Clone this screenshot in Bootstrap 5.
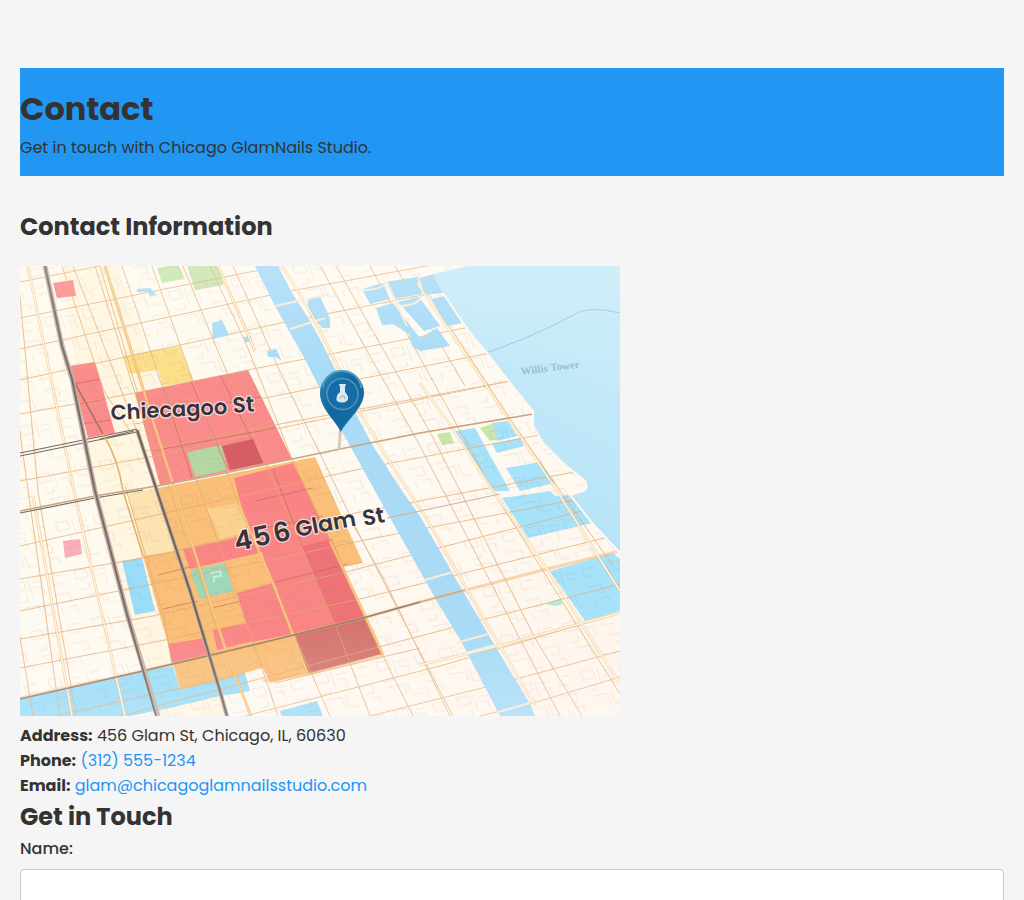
<!DOCTYPE html>
<html lang="en">
<head>
<meta charset="utf-8">
<meta name="viewport" content="width=device-width, initial-scale=1">
<title>Contact - Chicago GlamNails Studio</title>
<link href="https://cdn.jsdelivr.net/npm/bootstrap@5.3.0/dist/css/bootstrap.min.css" rel="stylesheet">
<style>
  body { background: #f5f5f5; color: #333; font-family: Poppins, Inter, "Open Sans", sans-serif; font-size: 16px; line-height: 25px; }
  .page { padding: 68px 20px 0; }
  .hero { background: #2196f3; padding: 20px 0 16px; margin-bottom: 32px; }
  h1 { font-size: 32px; line-height: 41px; font-weight: 700; margin-bottom: 6px; }
  h2 { font-size: 24px; line-height: 38px; font-weight: 700; margin: 0; }
  .info-title { margin-bottom: 20px; }
  .city-map { display: block; width: 600px; max-width: 100%; height: auto; margin-bottom: 7px; }
  a { color: #2196f3; text-decoration: none; }
  .name-label { font-weight: 500; margin-bottom: 8px; }
  .name-input { border-color: #ccc; border-radius: 4px; height: 46px; }
</style>
</head>
<body class="vh-100 overflow-hidden">
<main class="container-fluid page">
  <header class="hero">
    <h1>Contact</h1>
    <p class="mb-0">Get in touch with Chicago GlamNails Studio.</p>
  </header>
  <section>
    <h2 class="info-title">Contact Information</h2>
    <svg class="city-map" viewBox="0 0 600 450" role="img" aria-label="Map of the studio's neighborhood">
      <defs>
        <linearGradient id="lake" x1="0" y1="1" x2=".6" y2="0"><stop offset="0" stop-color="#aadcf7"/><stop offset=".7" stop-color="#b7e3f8"/><stop offset="1" stop-color="#c5eaf8"/></linearGradient>
        <linearGradient id="land" x1="0" y1="0" x2="1" y2="1"><stop offset="0" stop-color="#fffaed"/><stop offset=".5" stop-color="#fefaf2"/><stop offset="1" stop-color="#fef5ec"/></linearGradient>
        <linearGradient id="pin" x1="0" y1="0" x2="1" y2="1"><stop offset="0" stop-color="#2a88b8"/><stop offset=".45" stop-color="#12659d"/><stop offset="1" stop-color="#1b71a9"/></linearGradient>
        <linearGradient id="haze" x1="0" y1="0" x2="0" y2="1"><stop offset="0" stop-color="#fff" stop-opacity=".18"/><stop offset=".25" stop-color="#fff" stop-opacity="0"/><stop offset=".8" stop-color="#fff" stop-opacity="0"/><stop offset="1" stop-color="#fff" stop-opacity=".2"/></linearGradient>
        <pattern id="lots" width="62" height="48" patternUnits="userSpaceOnUse" patternTransform="matrix(1 -.21 .38 1 0 0)">
          <path d="M4 5h12v8H4zM20 4v16M24 8h11M24 13h8v9M42 3v11h10M46 6h9M5 24h9v-5M7 30h15v10M26 28v13h9M40 24h14v8h-8M42 37v7M49 37h8v6" fill="none" stroke="#96755f" stroke-opacity=".22" stroke-width=".6"/>
        </pattern>
        <clipPath id="coast"><path d="M0 0H448L413 8L423 27L443 57L455 73L467 87L490 117L513 145V160L523 177L543 197L565 215Q569 222 563 225L550 229L573 258L593 282L600 287V450H0Z"/></clipPath>
      </defs>
      <rect width="600" height="450" fill="url(#lake)"/>
      <path d="M466 87C500 75 530 62 553 49Q568 39 600 47" fill="none" stroke="#9bc9dc" stroke-width="1"/>
      <text transform="translate(501 109) rotate(-7)" font-family="Liberation Serif, serif" font-size="11" font-weight="700" fill="#93bfd5">Willis Tower</text>
      <g clip-path="url(#coast)">
        <rect width="600" height="450" fill="url(#land)"/>
        <path d="M40 0H98L160 190L137 222L207 450H138L75 225Z" fill="#fef0cb" opacity=".4"/>
        <g fill="#a6e2fa">
          <path d="M435 165L455 162L490 225H472ZM472 157L488 155L497 170L477 175ZM472 178L500 172L504 180L477 187ZM486 202L520 196L535 217L500 225ZM482 232L530 225L535 230L550 229L572 257L508 272ZM530 305L593 287L600 293V345L565 355Z"/>
          <path d="M102 295L122 292L135 345L115 349ZM0 432L123 405L153 400L160 423L205 410L225 407L230 425L200 430L145 443L110 450H0ZM260 445L297 435L303 450H262Z" fill="#9bdcf8"/>
        </g>
        <g fill="#c9e5ad"><path d="M137 2L150 0H159L165 13L142 17ZM167 0H198L204 19L175 24ZM460 162L472 158L478 173L470 175ZM417 168L430 166L434 177L422 179Z"/><path d="M525 338L540 333L543 338L535 340Z" fill="#b0ebd8"/></g>
        <path d="M104 90L160 80L173 115L143 120L138 104L110 108Z" fill="#fbdf88"/>
        <path d="M108 228L137 222L155 285L123 290Z" fill="#fde2b2"/>
        <path d="M123 290L155 285L138 222L295 191L343 297L323 301L362 388L250 417L243 402L225 407L160 423L148 378Z" fill="#fabf78"/>
        <path d="M187 243L218 237L231 265L200 273Z" fill="#fbd18e"/>
        <g fill="#fa8585">
          <path d="M33 17L53 14L56 30L37 32ZM50 100L75 96L95 167L68 172ZM115 127L228 104L272 193L140 219Z" opacity=".94"/>
          <path d="M214 212L273 197L287 225L310 273L345 352L273 368L232 376L217 327L252 317L242 286L170 303L163 283L231 268L220 235ZM148 378L185 372L190 388L152 397ZM193 364L229 357L233 375L197 384Z"/>
        </g>
        <path d="M43 275L60 273L62 288L45 292Z" fill="#f8afb7"/>
        <path d="M282 280L312 273L345 352L315 358Z" fill="#d95864" opacity=".4"/>
        <path d="M202 180L233 173L243 197L210 204Z" fill="#d65e64"/>
        <path d="M273 368L345 352L362 388L288 408Z" fill="#d57570"/>
        <path d="M167 186L201 179L208 204L174 211Z" fill="#b4d8a4"/>
        <path d="M170 305L205 297L213 325L180 333Z" fill="#9dd8bb"/><path d="M190 307l10-2 1 5-7 1v5" fill="none" stroke="#c9eddd" stroke-width="2"/>
        <path d="M225 407L242 402L248 415L230 420Z" fill="#fff6e8"/>
        <rect width="600" height="450" fill="url(#lots)"/>
        <!-- block boundaries inside the coloured districts -->
        <path d="M143 121L172 212M171 115L208 204M200 109L243 197M124 152L241 131M132 185L256 162M54 118L80 113M59 138L85 133M64 158L90 154M253 203L282 280L315 358M235 235L293 222M244 262L303 250M252 317L327 298M138 309L170 301M143 343L178 335M192 342L222 335" fill="none" stroke="#b9605a" stroke-width="1" opacity=".55"/>
        <!-- side streets -->
        <g fill="none" stroke="#e3ab72" stroke-width="1" opacity=".75">
          <path d="M0 16L80 0M0 52L250 2L420 -35M0 83L260 27L460 -10M0 114L270 55L480 14M0 148L115 127L228 104L455 60M0 215L135 190L270 160L500 113M115 158L250 131L480 85M125 185L260 158L490 115M0 280L340 203L540 165M0 313L123 292L330 248L560 205M0 345L133 318L350 273L590 227M0 373L133 350L330 305L600 235M0 402L140 375L340 333L600 268M100 450L400 370L600 318M225 450L420 400L600 347M350 450L470 420L600 385M460 450L510 438L600 411M35 450L220 409M255 417L400 382"/>
          <path d="M0 30L18 225L56 450M-8 110L40 450M-20 250L13 450M42 0L84 125L110 165M53 0L115 160L145 255M75 0L115 127L143 218M80 0L123 145L200 372M102 0L143 123L175 210L242 402L258 450M132 0L173 115L218 237L275 370L310 450M163 0L200 90L245 195L315 358L350 450M190 0L227 80L272 193L310 275L362 388L393 450M213 0L262 110L340 270L420 425L433 450M300 0L400 180L540 450M316 0L410 166L515 372L562 450M350 0L473 225L540 332L600 428M375 0L445 120M397 10L490 153L593 300M105 220L145 355L152 400M327 248L365 315L430 450"/>
        </g>
        <!-- river and harbour -->
        <g fill="#a9dbf6">
          <path d="M235 0L255 40L268 63L287 97L297 117L323 167L355 225L400 305L415 332L442 377L480 450H515L510 438L468 368L433 308L400 250L382 225L353 180L338 152L315 103L300 73L287 50L272 27L258 0Z"/>
          <path d="M288 32L300 30L310 53V62H302L288 45ZM342 23L363 17L370 33L350 38ZM365 16L397 11L402 28L375 33ZM356 42L373 37L400 72L417 62L430 80L400 85L392 80L389 68L373 58L362 59ZM378 36L399 31L420 60L404 65ZM400 12L413 8L423 27L404 29ZM411 33L425 30L443 57L427 60ZM117 23L130 22L137 29L130 30L128 26H117ZM192 57L202 54L209 69L193 73ZM247 85L256 83L262 95L256 91H248ZM223 71L231 70L232 76H225Z"/>
        </g>
        <!-- avenues with two carriageways -->
        <g fill="none" stroke-linejoin="round">
          <g stroke="#f0b66f" stroke-width="3"><path d="M8 0L54 225L105 450M13 230L52 450" opacity=".6"/><path d="M85 0L134 158L207 388L231 450M198 0L235 85M218 237L253 317L288 408M310 275L346 352L363 389" opacity=".8"/><path d="M262 0L290 45L316 97L342 150L372 200L405 250L438 308L473 368L515 440M400 117L433 163L473 225L527 303L600 418M397 17L440 80L537 225L600 325" opacity=".5"/><path d="M0 432L123 405L343 352L400 336L527 303L600 285M400 399L463 384L563 357L600 347M160 423L225 407M243 415L288 408L363 389" opacity=".5"/></g>
          <g stroke="#fff4dc" stroke-width="1.500"><path d="M8 0L54 225L105 450M13 230L52 450M198 0L235 85"/><path d="M262 0L290 45L316 97L342 150L372 200L405 250L438 308L473 368L515 440M400 117L433 163L473 225L527 303L600 418M397 17L440 80L537 225L600 325M400 399L463 384L563 357L600 347"/></g>
          <g stroke="#fbd58f" stroke-width="1"><path d="M85 0L134 158L207 388L231 450M218 237L253 317L288 408M310 275L346 352L363 389"/></g>
          <path d="M436 377L468 368M446 387L475 379M478 446L510 437M405 314L433 306M255 40L310 28M270 63L305 52M340 24Q360 25 367 16L387 60M380 40Q398 39 402 30" stroke="#f9ebda" stroke-width="2"/>
          <path d="M0 245L75 230L137 220L200 208L320 183L400 167L513 148" stroke="#c9a480" stroke-width="1.500"/>
          <path d="M367 252L480 228" stroke="#cfb08e" stroke-width="1"/>
          <path d="M0 247L75 232L123 224M0 187L117 163M0 190L117 166M80 173L114 165" stroke="#746963" stroke-width="1.200"/>
          <path d="M52 112L83 168" stroke="#a0705f" stroke-width="1.500"/>
          <path d="M83 168Q98 192 103 225L123 290" stroke="#e5ae68" stroke-width="1.500"/>
          <path d="M0 433L123 405L200 387L343 352L400 336" stroke="#967f70" stroke-width="1.500"/>
          <path d="M400 336L445 324" stroke="#c7a283" stroke-width="1"/>
          <path d="M25 0L42 80L52 113L75 225L107 348L138 450" stroke="#c6b2a5" stroke-width="5"/>
          <path d="M25 0L42 80L52 113L75 225L107 348L136 450" stroke="#766b68" stroke-width="2"/>
          <path d="M117 164L137 225L170 325L200 425L207 450" stroke="#beaa99" stroke-width="4"/>
          <path d="M117 164L137 225L170 325L200 425L207 450" stroke="#6d625e" stroke-width="2"/>
        </g>
      </g>
      <path d="M423 27L443 57L455 73L467 87L490 117L513 145V160L523 177L543 197L565 215Q569 222 563 225L550 229L573 258L600 287" fill="none" stroke="#fff9ec" stroke-width="2"/>
      <rect width="600" height="450" fill="url(#haze)"/>
      <g font-family="Poppins, sans-serif" font-weight="600" fill="#38343c" stroke="#fff" stroke-opacity=".7" stroke-width="2.500" stroke-linejoin="round" paint-order="stroke">
        <text transform="translate(91 154) rotate(-3)" font-size="21">Chiecagoo</text>
        <text transform="translate(213 147) rotate(-4)" font-size="22">St</text>
        <text transform="translate(216 285) rotate(-11)" font-size="27">4</text>
        <text transform="translate(235 281) rotate(-11)" font-size="27">5</text>
        <text transform="translate(255 277) rotate(-11)" font-size="27">6</text>
        <text transform="translate(277 271) rotate(-11)" font-size="22">Glam</text>
        <text transform="translate(344 260) rotate(-11)" font-size="22">St</text>
      </g>
      <path d="M320.500 163L319 183" stroke="#d9c9bb" stroke-width="3"/>
      <path d="M320.700 166C315 153 300 143 300 127A22 22 0 0 1 344 127C344 141 328 153 320.700 166Z" fill="url(#pin)"/>
      <path d="M303 122A19 17 0 0 1 341 122" fill="none" stroke="#4c9fbd" stroke-width="2"/>
      <circle cx="322.500" cy="128" r="15.500" fill="#176ca8" stroke="#4b98c5" stroke-width="1.500"/>
      <path d="M319 118H326L325 121V126Q330 131 327 135Q322 138 317 135Q315 130 320 126V121Z" fill="#dce9ef"/>
      <path d="M320 133q1-4 4-3l1 3" fill="none" stroke="#8babba" stroke-width="1"/>
    </svg>
    <div><strong>Address:</strong> 456 Glam St, Chicago, IL, 60630</div>
    <div><strong>Phone:</strong> <a href="tel:3125551234">(312) 555-1234</a></div>
    <div><strong>Email:</strong> <a href="mailto:glam@chicagoglamnailsstudio.com">glam@chicagoglamnailsstudio.com</a></div>
  </section>
  <section>
    <h2>Get in Touch</h2>
    <form>
      <label class="name-label d-block" for="name">Name:</label>
      <input class="form-control name-input" type="text" id="name" name="name">
    </form>
  </section>
</main>
<script src="https://cdn.jsdelivr.net/npm/bootstrap@5.3.0/dist/js/bootstrap.bundle.min.js"></script>
</body>
</html>
